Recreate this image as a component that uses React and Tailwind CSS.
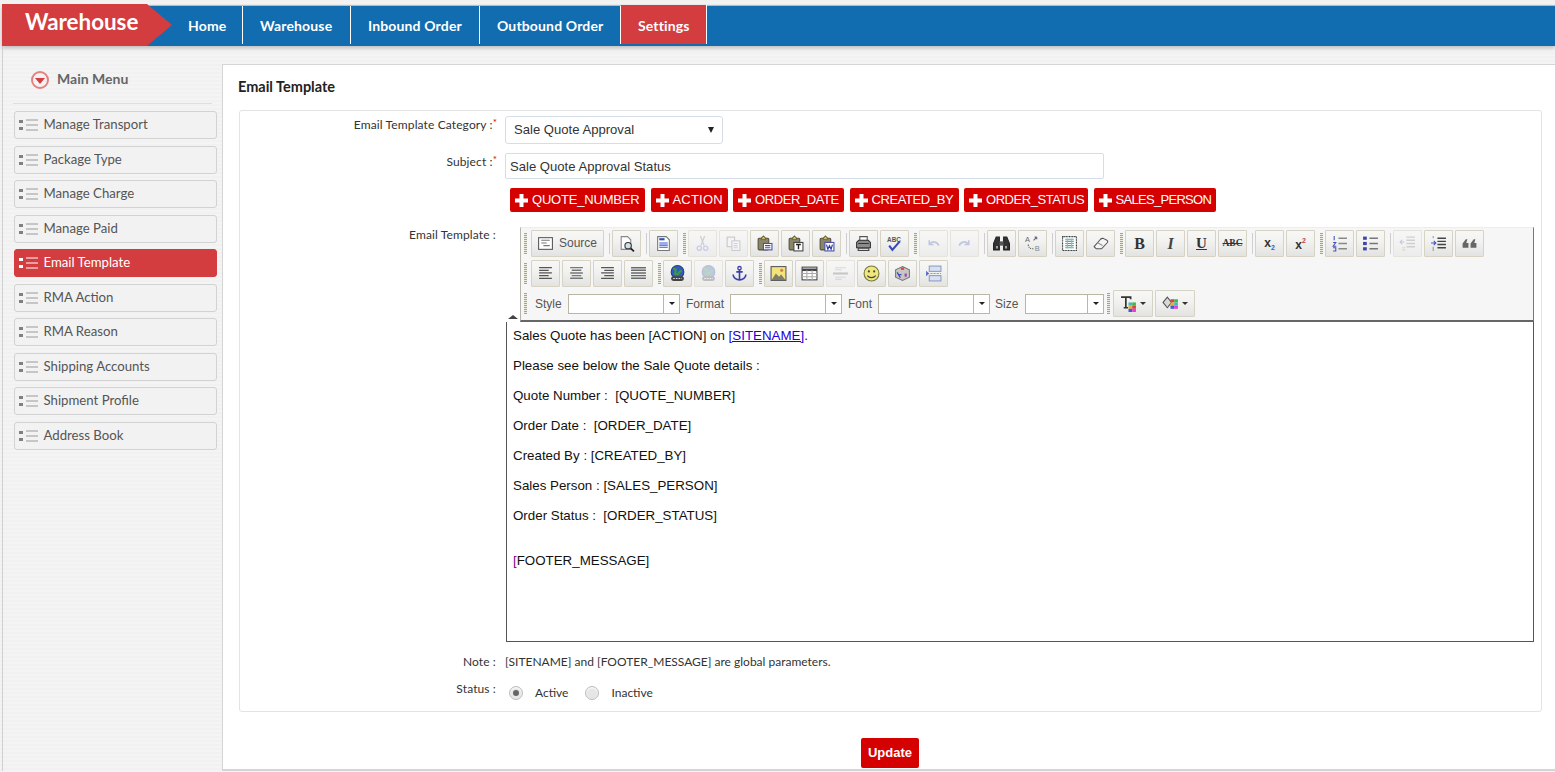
const lato = "font-['Lato',sans-serif]";
const arial = "font-['Liberation_Sans',Arial,sans-serif]";

const menu = [
  "Manage Transport",
  "Package Type",
  "Manage Charge",
  "Manage Paid",
  "Email Template",
  "RMA Action",
  "RMA Reason",
  "Shipping Accounts",
  "Shipment Profile",
  "Address Book",
];

const tags = [
  { label: "QUOTE_NUMBER", cls: "w-[135px] tracking-[-0.2px]" },
  { label: "ACTION", cls: "w-[77px] tracking-[0.2px]" },
  { label: "ORDER_DATE", cls: "w-[111px] tracking-[-0.4px]" },
  { label: "CREATED_BY", cls: "w-[109px] tracking-[-0.4px]" },
  { label: "ORDER_STATUS", cls: "w-[124px] tracking-[-0.45px]" },
  { label: "SALES_PERSON", cls: "w-[122px] tracking-[-0.7px]" },
];

const Svg = ({ children }) => (
  <svg width="17" height="17" viewBox="0 0 16 16" fill="none">
    {children}
  </svg>
);

// small hand drawn versions of the editor's toolbar bitmaps
const icons = {
  source: (
    <Svg>
      <rect x="1.5" y="2.5" width="13" height="11" fill="#fff" stroke="#555" />
      <path d="M4 5h8M4 7.5h5M6 10h6" stroke="#777" />
    </Svg>
  ),
  preview: (
    <Svg>
      <path d="M3 1.5h6l3 3v9H3z" fill="#fff" stroke="#888" />
      <circle cx="9.5" cy="10" r="3" fill="#cfe0e6" stroke="#333" />
      <path d="M12 12.5l3 3" stroke="#222" strokeWidth="1.6" />
    </Svg>
  ),
  templates: (
    <Svg>
      <path d="M2.5 1.5h8l3 3v10h-11z" fill="#fff" stroke="#777" />
      <path d="M4 4h5" stroke="#2d4fbe" strokeWidth="2" />
      <path d="M4 7.5h8M4 9.5h8M4 11.5h8" stroke="#3a5ad0" />
    </Svg>
  ),
  cut: (
    <Svg>
      <path d="M6 1l3.5 9M10 1L6.5 10" stroke="#a9a9a9" strokeWidth="1.2" />
      <circle cx="5" cy="12.5" r="2" stroke="#9fa8d8" strokeWidth="1.3" />
      <circle cx="11" cy="12.5" r="2" stroke="#9fa8d8" strokeWidth="1.3" />
    </Svg>
  ),
  copy: (
    <Svg>
      <rect x="2" y="2" width="7" height="9" fill="#f4f4f4" stroke="#999" />
      <rect x="6.5" y="5.5" width="7.5" height="9" fill="#f8f8f8" stroke="#9aa0b4" />
      <path d="M8 8h4M8 10h4M8 12h4" stroke="#aab" />
    </Svg>
  ),
  paste: (
    <Svg>
      <rect x="2" y="3" width="10" height="11" rx="1" fill="#8a8468" stroke="#54513f" />
      <path d="M5 3l2-2 2 2v1H5z" fill="#e6d57a" stroke="#6b6432" />
      <rect x="7" y="8" width="8" height="6" fill="#fff" stroke="#4650a8" />
      <path d="M8.5 10h5M8.5 12h5" stroke="#4650a8" />
    </Svg>
  ),
  pasteText: (
    <Svg>
      <rect x="2" y="3" width="10" height="11" rx="1" fill="#8a8468" stroke="#54513f" />
      <path d="M5 3l2-2 2 2v1H5z" fill="#e6d57a" stroke="#6b6432" />
      <rect x="6.5" y="7" width="8.5" height="8" fill="#fff" stroke="#444" />
      <path d="M8.5 9h4.5M10.8 9v4.5" stroke="#222" strokeWidth="1.3" />
    </Svg>
  ),
  pasteWord: (
    <Svg>
      <rect x="2" y="3" width="10" height="11" rx="1" fill="#8a8468" stroke="#54513f" />
      <path d="M5 3l2-2 2 2v1H5z" fill="#e6d57a" stroke="#6b6432" />
      <rect x="6.5" y="7" width="8.5" height="8" fill="#fff" stroke="#4650a8" />
      <path d="M8 9l1.3 4.5L10.8 10l1.5 3.5L13.6 9" stroke="#3038a8" strokeWidth="1.1" />
    </Svg>
  ),
  print: (
    <Svg>
      <path d="M4.5 1.5h7v4h-7z" fill="#fff" stroke="#555" />
      <path d="M1.5 7l2-2h9l2 2v5h-13z" fill="#8c8c8c" stroke="#333" />
      <path d="M3 12.5h10v2H3z" fill="#d8d8d8" stroke="#444" />
      <path d="M3 8h10" stroke="#333" />
    </Svg>
  ),
  spell: (
    <Svg>
      <text x="1" y="6.5" fontSize="6" fontWeight="700" fill="#555" fontFamily="Liberation Sans">ABC</text>
      <path d="M3 10l3 4 7-8" stroke="#3b49b8" strokeWidth="2" />
    </Svg>
  ),
  undo: (
    <Svg>
      <path d="M4 5v4h4" stroke="#8c98c8" strokeWidth="1.5" />
      <path d="M4.5 8.5C7 5.5 11.5 6 13 10" stroke="#8c98c8" strokeWidth="1.6" />
    </Svg>
  ),
  redo: (
    <Svg>
      <path d="M12 5v4H8" stroke="#8c98c8" strokeWidth="1.5" />
      <path d="M11.5 8.5C9 5.5 4.5 6 3 10" stroke="#8c98c8" strokeWidth="1.6" />
    </Svg>
  ),
  find: (
    <Svg>
      <path d="M.5 14V8l2.5-6h3v12zM15.5 14V8L13 2h-3v12z" fill="#333" stroke="#222" />
      <path d="M6 6h4v4H6z" fill="#555" />
      <path d="M3 11.5h1.5M11.5 11.5H13" stroke="#bbb" strokeWidth="2.5" />
    </Svg>
  ),
  replace: (
    <Svg>
      <text x="1" y="7" fontSize="7" fill="#666" fontFamily="Liberation Sans">A</text>
      <text x="10" y="15" fontSize="7" fill="#888" fontFamily="Liberation Sans">B</text>
      <path d="M4 9c0 3 2 4 5 4" stroke="#555" strokeDasharray="1 1" />
      <path d="M9 5l3-3M12 2h-2M12 2v2" stroke="#667" />
    </Svg>
  ),
  selectAll: (
    <Svg>
      <rect x="1.5" y="1.5" width="13" height="13" fill="#fff" stroke="#333" strokeDasharray="1 .5" />
      <path d="M4 4h8M4 6h8M4 8h8M4 10h8M4 12h8" stroke="#52a7a2" />
      <path d="M6 3.5v9M10 3.5v9" stroke="#7fc2bd" />
    </Svg>
  ),
  eraser: (
    <Svg>
      <path d="M2 11l6-7c1-1 2-1 3-.6l3 1.5c1 .6 1 1.6.3 2.4L9 13H4z" fill="#f4f4f4" stroke="#555" />
      <path d="M5 7l5 3" stroke="#888" />
    </Svg>
  ),
  bold: <span className="font-['Liberation_Serif',serif] font-bold text-[16px] text-[#333] leading-none">B</span>,
  italic: <span className="font-['Liberation_Serif',serif] font-bold italic text-[16px] text-[#444] leading-none">I</span>,
  underline: <span className="font-['Liberation_Serif',serif] font-bold underline text-[15px] text-[#333] leading-none">U</span>,
  strike: <span className="font-['Liberation_Serif',serif] font-bold line-through text-[9.5px] text-[#333] leading-none">ABC</span>,
  sub: (
    <span className={`${arial} font-bold text-[12px] text-[#333] leading-none`}>
      x<span className="text-[7px] text-[#4658c0] align-[-3px]">2</span>
    </span>
  ),
  sup: (
    <span className={`${arial} font-bold text-[12px] text-[#333] leading-none`}>
      x<span className="text-[7px] text-[#c04646] align-[6px]">2</span>
    </span>
  ),
  ol: (
    <Svg>
      <path d="M3 1v4M2 7h2.5L2 10.5h3M2 12h2.5v3H2" stroke="#4650b8" />
      <path d="M7 3h8M7 8h8M7 13h8" stroke="#888" strokeWidth="1.5" />
    </Svg>
  ),
  ul: (
    <Svg>
      <rect x="1" y="1.5" width="3.5" height="3" fill="#3f45a8" />
      <rect x="1" y="6.5" width="3.5" height="3" fill="#3f45a8" />
      <rect x="1" y="11.5" width="3.5" height="3" fill="#3f45a8" />
      <path d="M7 3h8M7 8h8M7 13h8" stroke="#777" strokeWidth="1.5" />
    </Svg>
  ),
  outdent: (
    <Svg>
      <path d="M7 2h8M7 5h8M7 8h8M7 11h8" stroke="#aaa" strokeWidth="1.3" />
      <path d="M5 6.5H1M3 4.5l-2 2 2 2" stroke="#8c9cd8" />
      <path d="M3 12h3M3 14h3" stroke="#bbb" />
    </Svg>
  ),
  indent: (
    <Svg>
      <path d="M7 3h8M7 6h8M7 9h8M7 12h8" stroke="#444" strokeWidth="1.3" />
      <path d="M1 7.5h4M3.5 5.5l2 2-2 2" stroke="#3f52c8" />
      <path d="M3 1v2M3 11v4" stroke="#999" />
    </Svg>
  ),
  quote: (
    <Svg>
      <path d="M1.5 12V8l3-4h1.5L5 7.5h2V12zM9 12V8l3-4h1.5l-1 3.5h2V12z" fill="#666" />
    </Svg>
  ),
  left: (
    <Svg>
      <path d="M2 2.5h12M2 5h9M2 7.5h12M2 10h9M2 12.5h12" stroke="#555" strokeWidth="1.2" />
    </Svg>
  ),
  center: (
    <Svg>
      <path d="M2 2.5h12M3.5 5h9M2 7.5h12M3.5 10h9M2 12.5h12" stroke="#777" strokeWidth="1.3" />
    </Svg>
  ),
  right: (
    <Svg>
      <path d="M2 2.5h12M5 5h9M2 7.5h12M5 10h9M2 12.5h12" stroke="#555" strokeWidth="1.2" />
    </Svg>
  ),
  justify: (
    <Svg>
      <path d="M1 2.5h14M1 5h14M1 7.5h14M1 10h14M1 12.5h14" stroke="#6a6a6a" strokeWidth="1.4" />
    </Svg>
  ),
  link: (
    <Svg>
      <circle cx="8" cy="6.5" r="6" fill="#2f5dc0" stroke="#263c80" />
      <path d="M4 4c2-1 3 1 2 3s2 2 3 1 1-3 3-2" stroke="#3f9a3a" strokeWidth="2" />
      <rect x="2" y="10.5" width="12" height="4.5" rx="2" fill="#444" />
      <path d="M4 12.7h8" stroke="#ddd" strokeDasharray="1.5 1" />
    </Svg>
  ),
  unlink: (
    <Svg>
      <circle cx="8" cy="6.5" r="6" fill="#7f9bd0" stroke="#7c8cac" />
      <path d="M4 4c2-1 3 1 2 3s2 2 3 1 1-3 3-2" stroke="#86b882" strokeWidth="2" />
      <rect x="2" y="10.5" width="12" height="4.5" rx="2" fill="#888" />
      <path d="M4 12.7h8" stroke="#eee" strokeDasharray="1.5 1" />
    </Svg>
  ),
  anchor: (
    <Svg>
      <circle cx="8" cy="3" r="1.6" stroke="#3a3fa8" strokeWidth="1.2" />
      <path d="M8 4.5V14M5 6.5h6M2 9c0 3 3 5 6 5s6-2 6-5" stroke="#3a3fa8" strokeWidth="1.5" />
    </Svg>
  ),
  image: (
    <Svg>
      <rect x="1" y="1.5" width="14" height="13" fill="#f3e37c" stroke="#555" />
      <path d="M1.5 14l4-6 3 3 2-2 4 5z" fill="#7d7d6a" />
      <circle cx="11" cy="5" r="1.5" fill="#c9874a" />
    </Svg>
  ),
  table: (
    <Svg>
      <rect x="1" y="2" width="14" height="12" fill="#fff" stroke="#444" />
      <path d="M1 4.5h14" stroke="#444" strokeWidth="2.4" />
      <path d="M1 8h14M1 11h14M5.5 5v9M10.5 5v9" stroke="#aaa" />
    </Svg>
  ),
  rule: (
    <Svg>
      <path d="M3 2.5h10M3 4.5h6M3 11.5h10M3 13.5h6" stroke="#bbb" />
      <path d="M1 8h14" stroke="#999" strokeWidth="2" />
    </Svg>
  ),
  smiley: (
    <Svg>
      <circle cx="8" cy="8" r="7" fill="#eee77a" stroke="#77763f" />
      <circle cx="5.5" cy="6" r="1" fill="#444" />
      <circle cx="10.5" cy="6" r="1" fill="#444" />
      <path d="M4 10c2 2.5 6 2.5 8 0" stroke="#444" />
    </Svg>
  ),
  special: (
    <Svg>
      <path d="M8 1.5l6.5 3v7L8 14.5l-6.5-3v-7z" fill="#c9c6c2" stroke="#777" />
      <rect x="6.5" y="2.5" width="3" height="2" fill="#e04040" />
      <path d="M3 7l3 5M5 9h2" stroke="#3048c8" strokeWidth="1.2" />
      <path d="M11 8v3" stroke="#a040b0" strokeWidth="2" />
    </Svg>
  ),
  pageBreak: (
    <Svg>
      <rect x="4" y="1" width="11" height="5" fill="#d8e0f2" stroke="#8d9bc4" />
      <rect x="4" y="10" width="11" height="5" fill="#d8e0f2" stroke="#8d9bc4" />
      <path d="M1 5.5L4 8l-3 2.5z" fill="#5570c8" />
      <path d="M5 8h10" stroke="#8d9bc4" strokeDasharray="2 1" />
    </Svg>
  ),
  textColor: (
    <Svg>
      <path d="M1 2h9v2M5.5 2v10M3.5 12h4" stroke="#333" strokeWidth="1.6" />
      <rect x="8" y="7" width="3.5" height="3" fill="#3fb8c8" />
      <rect x="11.5" y="7" width="3.5" height="3" fill="#40b84a" />
      <rect x="8" y="10" width="3.5" height="3" fill="#e8b030" />
      <rect x="11.5" y="10" width="3.5" height="3" fill="#e04040" />
      <rect x="8" y="13" width="3.5" height="3" fill="#4058d8" />
      <rect x="11.5" y="13" width="3.5" height="3" fill="#e040d8" />
    </Svg>
  ),
  bgColor: (
    <Svg>
      <path d="M1 7l4-5 4 5-4 5z" fill="#d8d8d8" stroke="#555" />
      <rect x="8" y="4" width="3.5" height="3" fill="#e04040" />
      <rect x="11.5" y="4" width="3.5" height="3" fill="#40b84a" />
      <rect x="8" y="7" width="3.5" height="3" fill="#e8b030" />
      <rect x="11.5" y="7" width="3.5" height="3" fill="#3fb8c8" />
      <rect x="8" y="10" width="3.5" height="3" fill="#4058d8" />
      <rect x="11.5" y="10" width="3.5" height="3" fill="#e040d8" />
    </Svg>
  ),
};

const btnClass =
  "h-[27px] flex items-center justify-center border border-[#d6d2c4] rounded-[1px] bg-[linear-gradient(#f7f7f6_0%,#f3f3f2_35%,#e3e3e2_100%)] shrink-0";

function Btn({ icon, off }) {
  return (
    <div className={`${btnClass} w-[29px] mr-[2px] ${off ? "opacity-50" : ""}`}>
      {icons[icon]}
    </div>
  );
}

function Sep() {
  return (
    <div className="w-[6px] flex justify-center shrink-0">
      <div className="w-px h-[21px] bg-[#cfcfcf]" />
    </div>
  );
}

function Grip({ className = "w-[8px]" }) {
  return (
    <div className={`${className} flex justify-center shrink-0`}>
      <div className="w-[3px] h-[21px] bg-[repeating-linear-gradient(to_bottom,#a8a488_0,#a8a488_1px,#ecebe0_1px,#ecebe0_2px)]" />
    </div>
  );
}

function Combo({ width }) {
  return (
    <div className={`${width} h-[20px] flex border border-[#b9b6a3] bg-white shrink-0`}>
      <div className="flex-1" />
      <div className="w-[16px] border-l border-[#b9b6a3] flex items-center justify-center">
        <div className="w-0 h-0 border-x-[3px] border-x-transparent border-t-[3px] border-t-[#222]" />
      </div>
    </div>
  );
}

function ColorBtn({ icon, className }) {
  return (
    <div className={`${btnClass} w-[40px] gap-[3px] ${className}`}>
      {icons[icon]}
      <div className="w-0 h-0 border-x-[3px] border-x-transparent border-t-[3px] border-t-[#333]" />
    </div>
  );
}

function Toolbar() {
  return (
    <div className="flex bg-white h-[95px]">
      <div className="w-[14px] flex items-end justify-center pb-[3px]">
        <div className="w-0 h-0 border-x-[5px] border-x-transparent border-b-[4px] border-b-[#444]" />
      </div>
      <div className={`flex-1 bg-[#f6f6f6] border-l border-[#b5b5aa] border-t border-t-[#eeeee6] border-r border-r-[#777] pt-[2px] border-b-2 border-b-[#666] ${arial}`}>
        <div className="flex items-center h-[27px] pl-[3px]">
          <Grip className="w-[3px] mr-[4px]" />
          <div className={`${btnClass} w-[73px] mr-[2px] gap-[5px] pr-[1px] text-[12px] text-[#555]`}>
            {icons.source}
            <span className="-mt-[1px]">Source</span>
          </div>
          <Sep />
          <Btn icon="preview" />
          <Sep />
          <Btn icon="templates" />
          <Grip />
          <Btn icon="cut" off />
          <Btn icon="copy" off />
          <Btn icon="paste" />
          <Btn icon="pasteText" />
          <Btn icon="pasteWord" />
          <Sep />
          <Btn icon="print" />
          <Btn icon="spell" />
          <Grip />
          <Btn icon="undo" off />
          <Btn icon="redo" off />
          <Sep />
          <Btn icon="find" />
          <Btn icon="replace" />
          <Sep />
          <Btn icon="selectAll" />
          <Btn icon="eraser" />
          <Grip />
          <Btn icon="bold" />
          <Btn icon="italic" />
          <Btn icon="underline" />
          <Btn icon="strike" />
          <Sep />
          <Btn icon="sub" />
          <Btn icon="sup" />
          <Grip />
          <Btn icon="ol" />
          <Btn icon="ul" />
          <Sep />
          <Btn icon="outdent" off />
          <Btn icon="indent" />
          <Btn icon="quote" />
        </div>
        <div className="flex items-center h-[27px] pl-[3px] mt-[3px]">
          <Grip className="w-[3px] mr-[4px]" />
          <Btn icon="left" />
          <Btn icon="center" />
          <Btn icon="right" />
          <Btn icon="justify" />
          <Grip />
          <Btn icon="link" />
          <Btn icon="unlink" off />
          <Btn icon="anchor" />
          <Grip />
          <Btn icon="image" />
          <Btn icon="table" />
          <Btn icon="rule" off />
          <Btn icon="smiley" />
          <Btn icon="special" />
          <Btn icon="pageBreak" />
        </div>
        <div className="flex items-center h-[27px] pl-[3px] mt-[3px] text-[12px] text-[#555]">
          <Grip className="w-[3px] mr-[8px]" />
          <span className="w-[33px]">Style</span>
          <Combo width="w-[112px]" />
          <span className="ml-[6px] w-[44px]">Format</span>
          <Combo width="w-[112px]" />
          <span className="ml-[6px] w-[30px]">Font</span>
          <Combo width="w-[112px]" />
          <span className="ml-[5px] w-[30px]">Size</span>
          <Combo width="w-[79px]" />
          <Grip className="w-[9px]" />
          <ColorBtn icon="textColor" className="mr-[2px]" />
          <ColorBtn icon="bgColor" />
        </div>
      </div>
    </div>
  );
}

function EditorBody() {
  const p = "mb-[14px]";
  return (
    <div className={`h-[320px] border border-[#555] border-t-0 bg-white px-[6px] pt-[6px] text-[13.33px] leading-[16px] text-[#111] ${arial}`}>
      <p className={p}>
        Sales Quote has been [ACTION] on <a className="text-[#2000d8] underline">[SITENAME]</a>.
      </p>
      <p className={p}>Please see below the Sale Quote details :</p>
      <p className={p}>Quote Number :&nbsp; [QUOTE_NUMBER]</p>
      <p className={p}>Order Date :&nbsp; [ORDER_DATE]</p>
      <p className={p}>Created By : [CREATED_BY]</p>
      <p className={p}>Sales Person : [SALES_PERSON]</p>
      <p className={p}>Order Status :&nbsp; [ORDER_STATUS]</p>
      <p className="mt-[29px]">
        <span className="text-[#800080]">[</span>FOOTER_MESSAGE]
      </p>
    </div>
  );
}

function Label({ children, req, className = "" }) {
  return (
    <div className={`w-[257px] shrink-0 text-right text-[12px] tracking-[0.12px] leading-[15px] text-[#333] ${className}`}>
      {children}
      {req && <span className="text-[#d50000] text-[10px] align-[3px]">*</span>}
      {!req && <span className="inline-block w-[1px]" />}
    </div>
  );
}

function Radio({ on, label, className }) {
  return (
    <div className={`flex items-center ${className}`}>
      <span className="w-[14px] h-[14px] rounded-full border border-[#bcbcbc] bg-[#e6e6e6] flex items-center justify-center shadow-[inset_0_1px_2px_#fff]">
        {on && <span className="w-[6px] h-[6px] rounded-full bg-[#666]" />}
      </span>
      <span className="ml-[12px]">{label}</span>
    </div>
  );
}

export default function App() {
  return (
    <div className={`h-[772px] overflow-hidden bg-[repeating-linear-gradient(0deg,#f4f4f4_0,#f4f4f4_2px,#f1f1f1_2px,#f1f1f1_4px)] pt-[5px] pl-[2px] ${lato}`}>
      <header className="h-[41px] bg-[#126cb0] border-t border-[#9cc4e0] flex relative z-10 shadow-[0_2px_4px_#bbb]">
        <div className="relative w-[145px] shrink-0 -mt-[2px] h-[42px] bg-[#d33d3f] pl-[23px] pt-[2px] text-white text-[22.4px] font-bold leading-[32px]">
          Warehouse
          <div className="absolute left-full top-0 w-0 h-0 border-y-[21px] border-y-transparent border-l-[25px] border-l-[#d33d3f]" />
        </div>
        <nav className="flex h-[38px] ml-[25px] text-[14px] tracking-[0.15px] font-bold text-white leading-[40px]">
          <div className="w-[71px] pl-[16px] border-r border-white">Home</div>
          <div className="w-[108px] pl-[17px] border-r border-white">Warehouse</div>
          <div className="w-[129px] pl-[17px] border-r border-white">Inbound Order</div>
          <div className="w-[141px] pl-[17px] border-r border-white">Outbound Order</div>
          <div className="w-[86px] pl-[17px] -mt-[1px] h-[39px] border-r border-white bg-[#d33d3f] leading-[42px]">Settings</div>
        </nav>
      </header>

      <div className="flex h-[725px] border-l border-[#d0d0d0]">
        <aside className="w-[219px] shrink-0">
          <div className="mx-[10px] h-[58px] border-b border-[#dedede] flex items-center pl-[18px] pt-[8px] gap-[8px] text-[14px] font-bold text-[#666]">
            <span className="w-[18px] h-[18px] rounded-full border-2 border-[#e58080] flex items-center justify-center mt-[3px]">
              <span className="w-0 h-0 border-x-[5px] border-x-transparent border-t-[6px] border-t-[#d33d3f] mt-[1px]" />
            </span>
            Main Menu
          </div>
          <ul className="mt-[7px] ml-[11px] w-[203px] flex flex-col gap-[6.55px]">
            {menu.map((name) => {
              const active = name === "Email Template";
              return (
                <li
                  key={name}
                  className={`h-[28px] rounded-[3px] border flex items-center pl-[4px] text-[13.2px] ${
                    active
                      ? "bg-[#d33d3f] border-[#d33d3f] text-white"
                      : "bg-[#f2f2f2] border-[#d2d2d2] text-[#555]"
                  }`}
                >
                  <svg width="21" height="14" viewBox="0 0 21 14" className="mr-[3.5px] shrink-0">
                    <g fill={active ? "#fff" : "#808080"}>
                      <rect x="0" y="2" width="4" height="3" />
                      <rect x="0" y="9" width="4" height="3" />
                    </g>
                    <path d="M7 2h12M7 7h12M7 12h12" stroke={active ? "#fff" : "#9a9a9a"} />
                  </svg>
                  {name}
                </li>
              );
            })}
          </ul>
        </aside>

        <main className="flex-1 mt-[18px] bg-white border-t border-l border-b-2 border-[#d5d5d5] pl-[15px] pr-[13px]">
          <h1 className="text-[14.5px] font-bold text-[#222] leading-[16px] mt-[14px]">Email Template</h1>
          <div className="mt-[15px] h-[602px] ml-[1px] border border-[#e3e3e3] rounded-[3px] pt-[5px] text-[#333]">
            <div className="flex">
              <Label req className="-mt-[1px]">Email Template Category :</Label>
              <div className="relative ml-[8px] w-[218px] h-[28px]">
                <select
                  defaultValue="Sale Quote Approval"
                  className={`w-full h-full border border-[#d5dde6] rounded-[3px] bg-white pl-[8px] text-[13.1px] text-[#333] appearance-none ${arial}`}
                >
                  <option>Sale Quote Approval</option>
                </select>
                <div className="absolute right-[9px] top-[11px] w-0 h-0 border-x-[3.5px] border-x-transparent border-t-[6px] border-t-[#222] pointer-events-none" />
              </div>
            </div>
            <div className="flex mt-[9px]">
              <Label req className="-mt-[1px]">Subject :</Label>
              <input
                defaultValue="Sale Quote Approval Status"
                className={`ml-[8px] w-[599px] h-[26px] border border-[#d5dde6] rounded-[2px] bg-white pl-[4px] text-[13.1px] text-[#333] ${arial}`}
              />
            </div>
            <div className={`flex mt-[9px] ml-[270px] gap-[5.5px] ${arial}`}>
              {tags.map((t) => (
                <div
                  key={t.label}
                  className={`h-[24px] bg-[#d50000] rounded-[2px] text-white text-[13px] flex items-center pl-[5px] whitespace-nowrap ${t.cls}`}
                >
                  <svg width="13" height="13" viewBox="0 0 13 13" className="mr-[4px] mt-[1px] shrink-0">
                    <path d="M4.5 0h4v4.5H13v4H8.5V13h-4V8.5H0v-4h4.5z" fill="#fff" />
                  </svg>
                  {t.label}
                </div>
              ))}
            </div>
            <div className="flex mt-[15px]">
              <Label>Email Template :</Label>
              <div className="ml-[9px] w-[1028px]">
                <Toolbar />
                <EditorBody />
              </div>
            </div>
            <div className="flex mt-[12px] text-[12px] leading-[15px]">
              <Label>Note :</Label>
              <div className="ml-[8px]">[SITENAME] and [FOOTER_MESSAGE] are global parameters.</div>
            </div>
            <div className="flex mt-[12px] text-[12px] leading-[15px]">
              <Label>Status :</Label>
              <Radio on label="Active" className="ml-[12px] mt-[4px]" />
              <Radio label="Inactive" className="ml-[17px] mt-[4px]" />
            </div>
          </div>
          <div className="flex justify-center mt-[26px]">
            <button className={`w-[58px] h-[30px] bg-[#d50000] rounded-[2px] text-white text-[13px] font-bold ${arial}`}>
              Update
            </button>
          </div>
        </main>
      </div>
    </div>
  );
}
